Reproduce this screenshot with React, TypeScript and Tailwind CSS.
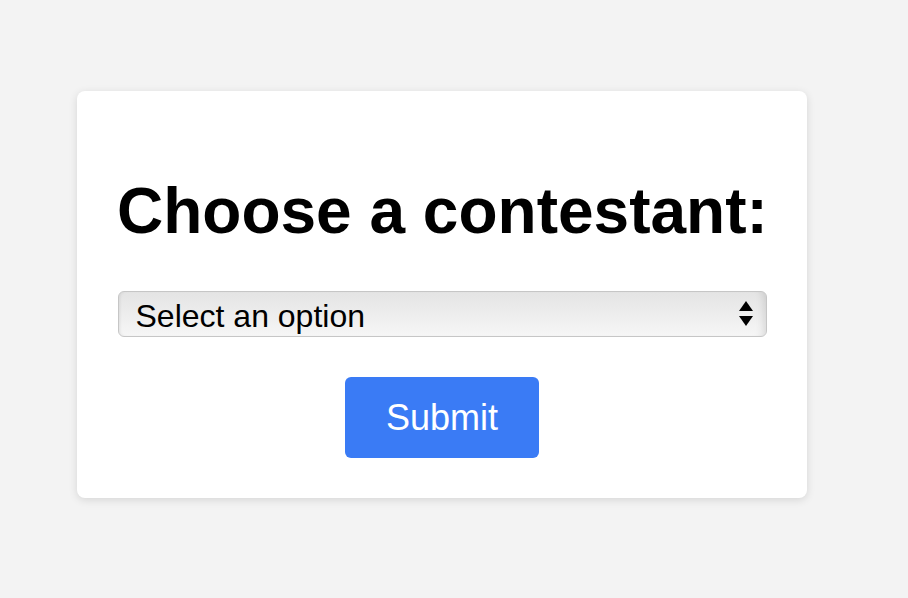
export default function App() {
  return (
    <div className="min-h-[598px] w-full bg-[#f3f3f3] font-['Liberation_Sans',Arial,sans-serif]">
      <div className="pl-[77px] pt-[91px]">
        <form
          className="flex w-[730px] flex-col items-center rounded-lg bg-white p-10 shadow-[0_2px_8px_rgba(0,0,0,0.12)]"
          onSubmit={(e) => e.preventDefault()}
        >
          <h1 className="my-[43px] w-full whitespace-nowrap text-left text-[64px] font-bold leading-[74px] text-black">
            Choose a contestant:
          </h1>
          <div className="relative h-[46px] w-[649px]">
            <select
              defaultValue=""
              className="h-full w-full appearance-none rounded-[6px] border border-[#c6c6c6] bg-[linear-gradient(to_bottom,#e4e4e4,#f6f6f6)] pl-[17px] text-[32px] text-black shadow-[inset_-10px_0_8px_-8px_rgba(0,0,0,0.12),inset_2px_0_3px_-1px_rgba(0,0,0,0.08)] outline-none"
            >
              <option value="">Select an option</option>
              <option value="1">Contestant 1</option>
              <option value="2">Contestant 2</option>
            </select>
            <svg
              className="pointer-events-none absolute right-[14px] top-[10px]"
              width="14"
              height="26"
              viewBox="0 0 14 26"
              aria-hidden="true"
            >
              <path d="M7 0 L14 10 L0 10 Z" fill="#000" />
              <path d="M0 15 L14 15 L7 25 Z" fill="#000" />
            </svg>
          </div>
          <button
            type="submit"
            className="mt-10 h-[81px] w-[194px] rounded-[6px] bg-[#3a7bf5] text-[36px] text-white"
          >
            Submit
          </button>
        </form>
      </div>
    </div>
  );
}
